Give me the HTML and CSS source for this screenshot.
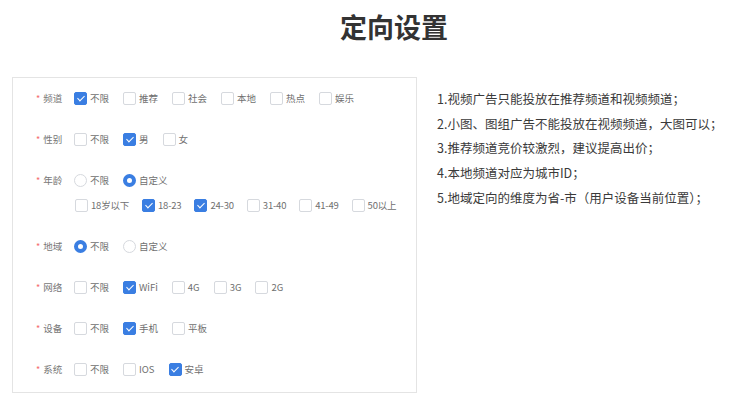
FILE: index.html
```html
<!DOCTYPE html>
<html lang="zh">
<head>
<meta charset="utf-8">
<link rel="stylesheet" href="styles.css">
</head>
<body>
<div class="header"><h1 class="title">定向设置</h1></div>
<div class="main">
  <div class="form">
    <div class="row">
      <div class="label"><span class="req">*</span>频道</div>
      <div class="opts">
        <span class="opt"><i class="cb on"></i>不限</span>
        <span class="opt"><i class="cb"></i>推荐</span>
        <span class="opt"><i class="cb"></i>社会</span>
        <span class="opt"><i class="cb"></i>本地</span>
        <span class="opt"><i class="cb"></i>热点</span>
        <span class="opt"><i class="cb"></i>娱乐</span>
      </div>
    </div>
    <div class="row">
      <div class="label"><span class="req">*</span>性别</div>
      <div class="opts">
        <span class="opt"><i class="cb"></i>不限</span>
        <span class="opt"><i class="cb on"></i>男</span>
        <span class="opt"><i class="cb"></i>女</span>
      </div>
    </div>
    <div class="group">
      <div class="row">
        <div class="label"><span class="req">*</span>年龄</div>
        <div class="opts">
          <span class="opt"><i class="rd"></i>不限</span>
          <span class="opt"><i class="rd on"></i>自定义</span>
        </div>
      </div>
      <div class="row sub">
        <div class="opts tight">
          <span class="opt"><i class="cb"></i>18岁以下</span>
          <span class="opt"><i class="cb on"></i>18-23</span>
          <span class="opt"><i class="cb on"></i>24-30</span>
          <span class="opt"><i class="cb"></i>31-40</span>
          <span class="opt"><i class="cb"></i>41-49</span>
          <span class="opt"><i class="cb"></i>50以上</span>
        </div>
      </div>
    </div>
    <div class="row">
      <div class="label"><span class="req">*</span>地域</div>
      <div class="opts">
        <span class="opt"><i class="rd on"></i>不限</span>
        <span class="opt"><i class="rd"></i>自定义</span>
      </div>
    </div>
    <div class="row">
      <div class="label"><span class="req">*</span>网络</div>
      <div class="opts">
        <span class="opt"><i class="cb"></i>不限</span>
        <span class="opt"><i class="cb on"></i>WiFi</span>
        <span class="opt"><i class="cb"></i>4G</span>
        <span class="opt"><i class="cb"></i>3G</span>
        <span class="opt"><i class="cb"></i>2G</span>
      </div>
    </div>
    <div class="row">
      <div class="label"><span class="req">*</span>设备</div>
      <div class="opts">
        <span class="opt"><i class="cb"></i>不限</span>
        <span class="opt"><i class="cb on"></i>手机</span>
        <span class="opt"><i class="cb"></i>平板</span>
      </div>
    </div>
    <div class="row">
      <div class="label"><span class="req">*</span>系统</div>
      <div class="opts">
        <span class="opt"><i class="cb"></i>不限</span>
        <span class="opt"><i class="cb"></i>IOS</span>
        <span class="opt"><i class="cb on"></i>安卓</span>
      </div>
    </div>
  </div>
  <ol class="notes">
    <li>1.视频广告只能投放在推荐频道和视频频道；</li>
    <li>2.小图、图组广告不能投放在视频频道，大图可以；</li>
    <li>3.推荐频道竞价较激烈，建议提高出价；</li>
    <li>4.本地频道对应为城市ID；</li>
    <li>5.地域定向的维度为省-市（用户设备当前位置）；</li>
  </ol>
</div>
</body>
</html>
```

FILE: styles.css
```css
html, body {
  margin: 0;
  padding: 0;
  background: #ffffff;
  width: 729px;
  height: 400px;
  overflow: hidden;
  font-family: "Noto Sans CJK SC", "Noto Sans", sans-serif;
}
.header {
  height: 77px;
  padding-left: 59px;
  box-sizing: border-box;
  text-align: center;
}
.title {
  margin: 0;
  padding-top: 9px;
  font-size: 27px;
  line-height: 36px;
  font-weight: 700;
  color: #333333;
}
.main {
  display: flex;
  align-items: flex-start;
  padding-left: 12px;
  gap: 20px;
}
.form {
  width: 405px;
  height: 316px;
  box-sizing: border-box;
  border: 1px solid #e4e4e4;
  padding: 12px 0 0 0;
  display: flex;
  flex-direction: column;
  gap: 25px;
}
.group {
  display: flex;
  flex-direction: column;
  gap: 9px;
}
.row {
  display: flex;
  align-items: center;
  height: 16px;
}
.row.sub {
  padding-left: 62px;
}
.label {
  width: 38px;
  padding-left: 23px;
  font-size: 9.5px;
  color: #777777;
  display: flex;
  align-items: center;
}
.req {
  color: #f56c6c;
  margin-right: 3px;
  font-size: 9px;
}
.opts {
  display: flex;
  align-items: center;
  gap: 14px;
}
.opts.tight {
  gap: 13px;
}
.opts.tight .opt {
  letter-spacing: -0.2px;
}
.opt {
  display: flex;
  align-items: center;
  gap: 3px;
  font-size: 9.5px;
  color: #707070;
  white-space: nowrap;
}
.cb, .rd {
  display: block;
  width: 13px;
  height: 13px;
  box-sizing: border-box;
  border: 1px solid #d6d9de;
  border-radius: 2px;
  background: #ffffff;
  position: relative;
}
.rd {
  border-radius: 50%;
}
.cb.on {
  background: #3a7ee2;
  border-color: #3a7ee2;
}
.cb.on::after {
  content: "";
  position: absolute;
  left: 3.5px;
  top: 1.5px;
  width: 3px;
  height: 6px;
  border: solid #ffffff;
  border-width: 0 1.6px 1.6px 0;
  transform: rotate(45deg);
}
.rd.on {
  border: 4px solid #3a7ee2;
}
.notes {
  list-style: none;
  margin: 0;
  padding: 10px 0 0 0;
  font-size: 12.5px;
  line-height: 24.7px;
  color: #3a3a3a;
}
.notes li {
  white-space: nowrap;
}
```
